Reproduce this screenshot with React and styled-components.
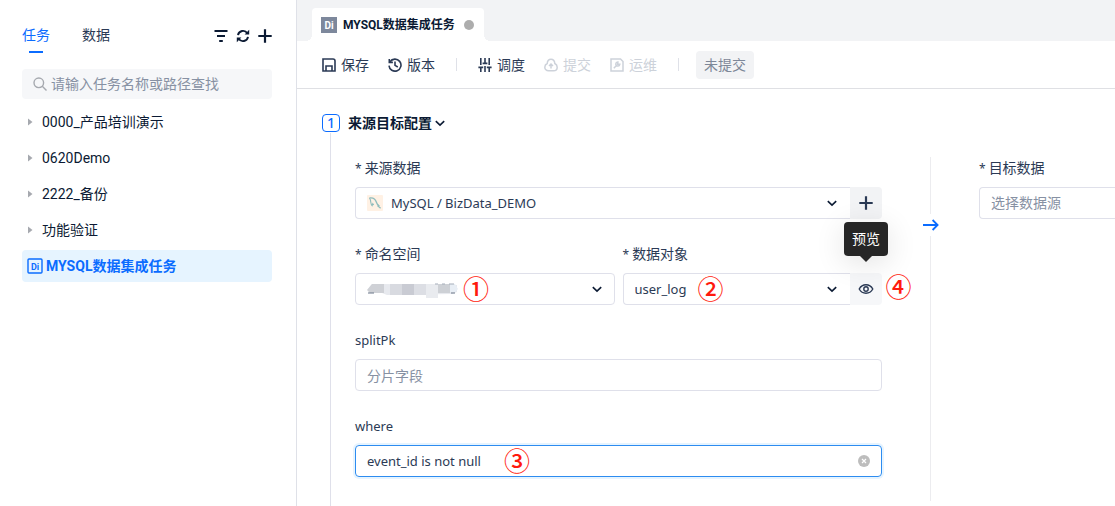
import React, { useState } from 'react';
import styled, { createGlobalStyle } from 'styled-components';

const GlobalStyle = createGlobalStyle`
  * {
    box-sizing: border-box;
  }

  body {
    margin: 0;
    background-color: #ffffff;
    color: #0b1a33;
    font-family: Roboto, 'Noto Sans CJK SC', sans-serif;
    font-size: 14px;
    line-height: 22px;
  }

  button,
  input,
  select {
    margin: 0;
    padding: 0;
    border: 0;
    background: none;
    color: inherit;
    font: inherit;
  }

  button {
    cursor: pointer;
  }

  svg {
    display: block;
    flex: none;
  }
`;

const Layout = styled.div`
  display: flex;
  min-height: 100vh;
`;

const Sidebar = styled.aside`
  flex: 0 0 297px;
  padding: 24px 24px 24px 22px;
  border-right: 1px solid #dfe1e8;
`;

const SideHeader = styled.div`
  display: flex;
  align-items: flex-start;
  justify-content: space-between;
  margin-bottom: 16px;
`;

const SideTabs = styled.div`
  display: flex;
  gap: 32px;
`;

const SideTab = styled.button`
  display: flex;
  flex-direction: column;
  align-items: center;
  gap: 4px;
  height: 29px;
  line-height: 23px;
  color: ${(props) => (props.$active ? '#0b6cff' : '#2b3a55')};

  &::after {
    content: '';
    width: 14px;
    height: 2px;
    background-color: ${(props) => (props.$active ? '#0b6cff' : 'transparent')};
  }
`;

const SideActions = styled.div`
  display: flex;
  gap: 8px;
  padding-top: 5px;
`;

const IconButton = styled.button`
  display: flex;
`;

const Search = styled.label`
  display: flex;
  align-items: center;
  gap: 4px;
  height: 30px;
  margin-bottom: 7px;
  padding: 0 11px;
  border-radius: 4px;
  background-color: #f6f7f9;
`;

const SearchInput = styled.input`
  flex: 1;
  min-width: 0;
  outline: 0;

  &::placeholder {
    color: #8791a3;
    opacity: 1;
  }
`;

const Tree = styled.ul`
  display: flex;
  flex-direction: column;
  gap: 4px;
  margin: 0;
  padding: 0;
  list-style: none;
`;

const TreeItem = styled.button`
  display: flex;
  align-items: center;
  gap: ${(props) => (props.$active ? '3px' : '9px')};
  width: 100%;
  height: 32px;
  padding: 0 ${(props) => (props.$active ? '5px' : '6px')};
  border-radius: 4px;
  text-align: left;
  color: ${(props) => (props.$active ? '#0b6cff' : '#0b1a33')};
  font-weight: ${(props) => (props.$active ? 700 : 400)};
  background-color: ${(props) => (props.$active ? '#e6f4ff' : 'transparent')};
`;

const Main = styled.main`
  flex: 1;
  display: flex;
  flex-direction: column;
  min-width: 0;
`;

const TabBar = styled.div`
  display: flex;
  align-items: flex-end;
  height: 41px;
  padding-left: 15px;
  background-color: #f2f3f5;
`;

const Tab = styled.button`
  position: relative;
  display: flex;
  align-items: center;
  gap: 6px;
  height: 33px;
  padding: 0 10px 0 9px;
  border-radius: 4px 4px 0 0;
  background-color: #ffffff;
  font-size: 12px;
  font-weight: 700;

  &::before,
  &::after {
    content: '';
    position: absolute;
    bottom: 0;
    width: 6px;
    height: 6px;
  }

  &::before {
    right: 100%;
    background: radial-gradient(circle at 0 0, transparent 6px, #ffffff 6px);
  }

  &::after {
    left: 100%;
    background: radial-gradient(circle at 100% 0, transparent 6px, #ffffff 6px);
  }
`;

const Dot = styled.span`
  width: 10px;
  height: 10px;
  margin-left: 3px;
  border-radius: 50%;
  background-color: #adadad;
`;

const Toolbar = styled.div`
  display: flex;
  align-items: center;
  gap: 21px;
  height: 48px;
  padding-left: 25px;
  border-bottom: 1px solid #dfe0e4;
`;

const ToolGroup = styled.div`
  display: flex;
  align-items: center;
  gap: ${(props) => props.$gap || '19px'};
`;

const Tool = styled.button`
  display: flex;
  align-items: center;
  gap: 5px;
  color: #2b3a55;

  &:disabled {
    color: #cdd2da;
    cursor: default;
  }
`;

const Divider = styled.span`
  width: 1px;
  height: 13px;
  background-color: #dfe1e8;
`;

const Status = styled.span`
  padding: 3px 8px;
  border-radius: 4px;
  background-color: #f2f3f5;
  color: #7d8798;
`;

const Section = styled.section`
  flex: 1;
  display: flex;
  flex-direction: column;
  padding: 24px 0 0 25px;
`;

const SectionHeader = styled.h2`
  display: flex;
  align-items: center;
  gap: 8px;
  height: 20px;
  margin: 0;
  font-size: 14px;
`;

const Step = styled.span`
  width: 18px;
  height: 18px;
  border: 1px solid #0b6cff;
  border-radius: 4px;
  color: #0b6cff;
  font-family: 'Noto Sans', sans-serif;
  font-weight: 500;
  line-height: 16px;
  text-align: center;
`;

const Toggle = styled.button`
  display: flex;
  align-items: center;
  gap: 2px;
  font-weight: 700;
`;

const SectionBody = styled.div`
  flex: 1;
  display: grid;
  grid-template-columns: 527fr 97px 136fr;
  align-items: start;
  margin-left: 8px;
  padding: 24px 0 5px 24px;
  border-left: 1px solid #dfe0ea;
  font-family: 'Noto Sans', 'Noto Sans CJK SC', sans-serif;
`;

const Form = styled.div`
  display: grid;
  grid-template-columns: 1fr 1fr;
  gap: 24px 8px;
  padding-bottom: 24px;
`;

const Field = styled.div`
  display: flex;
  flex-direction: column;
  gap: 8px;
  min-width: 0;
`;

const WideField = styled(Field)`
  grid-column: 1 / -1;
`;

const Label = styled.label`
  height: 22px;
  color: #2b3a55;
  font-size: ${(props) => (props.$latin ? '13px' : '14px')};
`;

const Required = styled.span`
  margin-right: 3px;
  font-size: 12px;
`;

const Control = styled.div`
  position: relative;
  display: flex;
  height: 32px;
`;

const SelectBox = styled.div`
  position: relative;
  flex: 1;
  min-width: 0;
`;

const Select = styled.select`
  width: 100%;
  height: 32px;
  padding: 0 32px 0 ${(props) => (props.$icon ? '35px' : '11px')};
  border: 1px solid #dfe0ea;
  border-radius: 4px;
  border-right-width: ${(props) => (props.$joined ? 0 : '1px')};
  border-top-right-radius: ${(props) => (props.$joined ? 0 : '4px')};
  border-bottom-right-radius: ${(props) => (props.$joined ? 0 : '4px')};
  appearance: none;
  background-color: #ffffff;
  color: #2b3a55;
  font-size: 13px;
`;

const TargetSelect = styled(Select)`
  border-right: 0;
  border-radius: 4px 0 0 4px;
  color: #8791a3;
  font-size: 14px;
`;

const Arrow = styled.span`
  position: absolute;
  top: 10px;
  right: 12px;
  pointer-events: none;
`;

const Prefix = styled.span`
  position: absolute;
  top: 8px;
  left: 12px;
  pointer-events: none;
`;

const Addon = styled.button`
  display: flex;
  align-items: center;
  justify-content: center;
  width: 32px;
  border-radius: 0 4px 4px 0;
  background-color: ${(props) => (props.$light ? '#f6f7f9' : '#f2f3f5')};
  color: #2b3a55;
`;

const TextInput = styled.input`
  width: 100%;
  height: 32px;
  padding: 0 32px 0 11px;
  border: 1px solid ${(props) => (props.$focused ? '#2d8cf0' : '#dfe0ea')};
  border-radius: 4px;
  outline: 0;
  box-shadow: ${(props) => (props.$focused ? '0 0 0 2px #e6f4ff' : 'none')};
  color: #2b3a55;
  font-size: ${(props) => (props.$focused ? '13px' : '14px')};

  &::placeholder {
    color: #8791a3;
    opacity: 1;
  }
`;

const Clear = styled.button`
  position: absolute;
  top: 10px;
  right: 12px;
`;

const Tooltip = styled.div`
  position: absolute;
  right: -6px;
  bottom: 49px;
  padding: 6px 8px;
  border-radius: 4px;
  background-color: #262626;
  box-shadow: 0 6px 30px rgba(0, 0, 0, 0.12);
  color: #ffffff;

  &::after {
    content: '';
    position: absolute;
    top: 100%;
    left: 50%;
    margin-left: -6px;
    border: 6px solid transparent;
    border-bottom-width: 0;
    border-top-color: #262626;
  }
`;

const Mark = styled.span`
  position: absolute;
  top: ${(props) => props.$top || '2px'};
  left: ${(props) => props.$left};
  color: #ff1a0d;
  font-family: 'Noto Sans CJK SC', sans-serif;
  font-size: 26px;
  font-weight: 500;
  line-height: 26px;
  pointer-events: none;
`;

const Flow = styled.div`
  align-self: stretch;
  display: flex;
  flex-direction: column;
  align-items: center;
  gap: 3px;
  color: #0b6cff;

  &::before,
  &::after {
    content: '';
    width: 1px;
    background-color: #ececef;
  }

  &::before {
    height: 57px;
  }

  &::after {
    flex: 1;
  }
`;

const DiIcon = ({ filled }) => (
  <svg width="16" height="16" viewBox="0 0 16 16" aria-hidden="true">
    <rect
      x={filled ? 0 : 1}
      y={filled ? 0 : 1}
      width={filled ? 16 : 14}
      height={filled ? 16 : 14}
      rx={filled ? 0 : 1}
      fill={filled ? '#7d889c' : 'none'}
      stroke={filled ? 'none' : '#0b6cff'}
      strokeWidth="1.4"
    />
    <text
      x="8"
      y="11.5"
      textAnchor="middle"
      fontSize={filled ? 10 : 9}
      fontWeight="700"
      fontFamily="Roboto, sans-serif"
      fill={filled ? '#ffffff' : '#0b6cff'}>
      Di
    </text>
  </svg>
);

const Stroke = ({ size = 14, width = 1.5, children }) => (
  <svg
    width={size}
    height={size}
    viewBox={`0 0 ${size} ${size}`}
    fill="none"
    stroke="currentColor"
    strokeWidth={width}
    aria-hidden="true">
    {children}
  </svg>
);

const ChevronIcon = () => (
  <Stroke size={12} width={1.6}>
    <path d="M1.8 4.2 6 8.2l4.2-4" />
  </Stroke>
);

const PlusIcon = () => (
  <Stroke width={2.2}>
    <path d="M7 .3v13.4M.3 7h13.4" />
  </Stroke>
);

const FilterIcon = () => (
  <Stroke width={2}>
    <path d="M.5 2h13M3 7h8M5.2 12h3.6" />
  </Stroke>
);

const RefreshIcon = () => (
  <Stroke width={1.9}>
    <path d="M2 6.2A5.1 5.1 0 0 1 11.3 4.2M12 7.8A5.1 5.1 0 0 1 2.7 9.8" />
    <path d="M13.2.8v4.6H8.6zM.8 13.2V8.6h4.6z" fill="currentColor" stroke="none" />
  </Stroke>
);

const SearchIcon = () => (
  <svg width="14" height="14" viewBox="0 0 14 14" fill="none" stroke="#a6a9af" strokeWidth="1.4" aria-hidden="true">
    <circle cx="5.8" cy="5.8" r="4.8" />
    <path d="m9.3 9.3 4.2 4.2" />
  </svg>
);

const CaretIcon = () => (
  <svg width="5" height="8" viewBox="0 0 5 8" aria-hidden="true">
    <path d="M0 .5 4.5 4 0 7.5z" fill="#a6a9af" />
  </svg>
);

const SaveIcon = () => (
  <Stroke width={1.6}>
    <path d="M1 1h10a2 2 0 0 1 2 2v10H1z" />
    <path d="M4 13V8h6v5" />
  </Stroke>
);

const HistoryIcon = () => (
  <Stroke width={1.6}>
    <path d="M2 3.8A6 6 0 1 1 1 7.6" />
    <path d="M1.3.9v3.5h3.6M7 3.6v3.8l2.8 1.6" />
  </Stroke>
);

const ScheduleIcon = () => (
  <Stroke width={1.6}>
    <path d="M2.8 0v7M2.8 9v5M7 0v5M7 8v6M11.2 0v7M11.2 9v5" />
    <path d="M.4 9.4h4.8M4.6 5.4h4.8M8.8 9.4h4.8" />
  </Stroke>
);

const SubmitIcon = () => (
  <Stroke>
    <path d="M3.2 5.5C3.4 2.9 4.9 1.2 7 1.2s3.6 1.7 3.8 4.3c1.5.8 2.4 2.1 2.4 3.7 0 2.2-1.6 3.6-3.7 3.6h-5C2.4 12.8.8 11.4.8 9.2c0-1.6.9-2.9 2.4-3.7z" />
    <path d="M7 10.5v-4M5 8l2-2 2 2" />
  </Stroke>
);

const OpsIcon = () => (
  <Stroke>
    <path d="M1 1h9.5L13 3.5V13H1z" />
    <path d="m3.8 10.2 2.9-2.9M9.8 6.3a2 2 0 1 1-1.9-2.3l-.2 2.2z" />
  </Stroke>
);

const EyeIcon = () => (
  <Stroke size={16} width={1.4}>
    <path d="M1.2 8C2.8 5.1 5.2 3.8 8 3.8s5.2 1.3 6.8 4.2c-1.6 2.9-4 4.2-6.8 4.2S2.8 10.9 1.2 8z" />
    <circle cx="8" cy="8" r="2.2" />
  </Stroke>
);

const ArrowIcon = () => (
  <Stroke size={16} width={1.8}>
    <path d="M0 8h15M9.6 3l5 5-5 5" />
  </Stroke>
);

const MysqlIcon = () => (
  <svg width="16" height="16" viewBox="0 0 16 16" fill="none" aria-hidden="true">
    <rect width="16" height="16" rx="1" fill="#fff1e4" />
    <path d="M2.5 3c3-.5 5.800.7 6.900 4.200.5 1.600 1.200 2.500 2.400 3.300l-.8.6 2.600 2.200" stroke="#8fbcbc" strokeWidth="1.3" />
    <path d="M2.5 3c.8 1.200 1.200 2.600 1.300 4.200.2 1.600.6 2.800 1.300 3.500l.7-2 .9 1.300" stroke="#8fbcbc" strokeWidth="1.1" />
  </svg>
);

const MaskedValue = () => (
  <svg width="91" height="18" viewBox="0 0 91 18" aria-hidden="true">
    <path d="M1 8 5 3h10l75 1v7l-5 2-65 1-5-2H2z" fill="#e7e9ee" />
    <path d="M5 3h12v9H3L0 9z" fill="#cfd1d6" />
    <path d="M23 3h12v11H23z" fill="#d8dae0" />
    <path d="M35 3h12v11H35z" fill="#c9cbd3" />
    <path d="M47 3h12v11H47z" fill="#dcdee4" />
    <path d="M59 3h12v14H59z" fill="#e9ebef" />
    <path d="M71 3h12v9H71z" fill="#cdd0d5" />
    <path d="M83 3h5l3 5-3 3h-5z" fill="#e8eef5" />
    <path d="M1 12h6M84 12h4" stroke="#6b7689" />
    <path d="M68 3h3M75 3h3M82 3h5" stroke="#a5adba" />
  </svg>
);

const ClearIcon = () => (
  <svg width="12" height="12" viewBox="0 0 12 12" aria-hidden="true">
    <circle cx="6" cy="6" r="6" fill="#bdbdbd" />
    <path d="m4 4 4 4M8 4 4 8" stroke="#ffffff" strokeWidth="1.2" />
  </svg>
);

const folders = ['0000_产品培训演示', '0620Demo', '2222_备份', '功能验证'];

function App() {
  const [where, setWhere] = useState('event_id is not null');

  return (
    <>
      <GlobalStyle />
      <Layout>
        <Sidebar>
          <SideHeader>
            <SideTabs>
              <SideTab $active>任务</SideTab>
              <SideTab>数据</SideTab>
            </SideTabs>
            <SideActions>
              <IconButton aria-label="筛选">
                <FilterIcon />
              </IconButton>
              <IconButton aria-label="刷新">
                <RefreshIcon />
              </IconButton>
              <IconButton aria-label="新建">
                <PlusIcon />
              </IconButton>
            </SideActions>
          </SideHeader>
          <Search>
            <SearchIcon />
            <SearchInput aria-label="查找任务" placeholder="请输入任务名称或路径查找" />
          </Search>
          <Tree>
            {folders.map((name) => (
              <li key={name}>
                <TreeItem>
                  <CaretIcon />
                  {name}
                </TreeItem>
              </li>
            ))}
            <li>
              <TreeItem $active>
                <DiIcon />
                MYSQL数据集成任务
              </TreeItem>
            </li>
          </Tree>
        </Sidebar>

        <Main>
          <TabBar>
            <Tab>
              <DiIcon filled />
              MYSQL数据集成任务
              <Dot />
            </Tab>
          </TabBar>

          <Toolbar>
            <ToolGroup>
              <Tool>
                <SaveIcon />
                保存
              </Tool>
              <Tool>
                <HistoryIcon />
                版本
              </Tool>
            </ToolGroup>
            <Divider />
            <ToolGroup>
              <Tool>
                <ScheduleIcon />
                调度
              </Tool>
              <Tool disabled>
                <SubmitIcon />
                提交
              </Tool>
              <Tool disabled>
                <OpsIcon />
                运维
              </Tool>
            </ToolGroup>
            <ToolGroup $gap="17px">
              <Divider />
              <Status>未提交</Status>
            </ToolGroup>
          </Toolbar>

          <Section>
            <SectionHeader>
              <Step>1</Step>
              <Toggle>
                来源目标配置
                <ChevronIcon />
              </Toggle>
            </SectionHeader>

            <SectionBody>
              <Form>
                <WideField>
                  <Label htmlFor="source">
                    <Required>*</Required>来源数据
                  </Label>
                  <Control>
                    <SelectBox>
                      <Select id="source" $icon $joined>
                        <option>MySQL / BizData_DEMO</option>
                      </Select>
                      <Prefix>
                        <MysqlIcon />
                      </Prefix>
                      <Arrow>
                        <ChevronIcon />
                      </Arrow>
                    </SelectBox>
                    <Addon aria-label="新建数据源">
                      <PlusIcon />
                    </Addon>
                  </Control>
                </WideField>

                <Field>
                  <Label htmlFor="namespace">
                    <Required>*</Required>命名空间
                  </Label>
                  <Control>
                    <SelectBox>
                      <Select id="namespace" />
                      <Prefix>
                        <MaskedValue />
                      </Prefix>
                      <Arrow>
                        <ChevronIcon />
                      </Arrow>
                    </SelectBox>
                    <Mark $left="108px">①</Mark>
                  </Control>
                </Field>

                <Field>
                  <Label htmlFor="object">
                    <Required>*</Required>数据对象
                  </Label>
                  <Control>
                    <SelectBox>
                      <Select id="object" $joined>
                        <option>user_log</option>
                      </Select>
                      <Arrow>
                        <ChevronIcon />
                      </Arrow>
                    </SelectBox>
                    <Addon $light aria-label="预览" aria-describedby="preview-tip">
                      <EyeIcon />
                    </Addon>
                    <Tooltip id="preview-tip" role="tooltip">
                      预览
                    </Tooltip>
                    <Mark $left="75px">②</Mark>
                    <Mark $left="263px" $top="0">
                      ④
                    </Mark>
                  </Control>
                </Field>

                <WideField>
                  <Label htmlFor="split" $latin>
                    splitPk
                  </Label>
                  <Control>
                    <TextInput id="split" placeholder="分片字段" />
                  </Control>
                </WideField>

                <WideField>
                  <Label htmlFor="where" $latin>
                    where
                  </Label>
                  <Control>
                    <TextInput
                      id="where"
                      $focused
                      value={where}
                      onChange={(e) => setWhere(e.target.value)}
                    />
                    <Clear aria-label="清空" onClick={() => setWhere('')}>
                      <ClearIcon />
                    </Clear>
                    <Mark $left="149px">③</Mark>
                  </Control>
                </WideField>
              </Form>

              <Flow>
                <ArrowIcon />
              </Flow>

              <Field>
                <Label htmlFor="target">
                  <Required>*</Required>目标数据
                </Label>
                <TargetSelect id="target">
                  <option>选择数据源</option>
                </TargetSelect>
              </Field>
            </SectionBody>
          </Section>
        </Main>
      </Layout>
    </>
  );
}

export default App;
